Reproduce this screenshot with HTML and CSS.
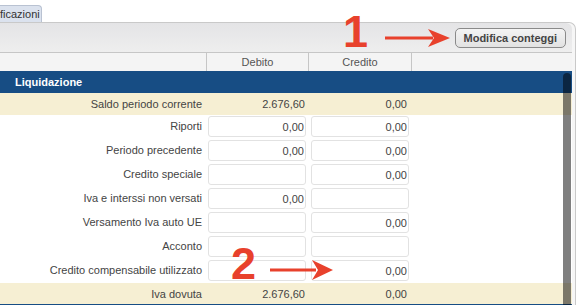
FILE: index.html
```html
<!DOCTYPE html>
<html lang="it">
<head>
  <meta charset="UTF-8">
  <title>Liquidazione</title>
  <link rel="stylesheet" href="styles.css">
</head>
<body>
  <div class="tabs">
    <div class="tab">ficazioni</div>
  </div>

  <div class="panel">
    <div class="toolbar">
      <button class="btn">Modifica conteggi</button>
    </div>

    <div class="colhead">
      <div></div>
      <div>Debito</div>
      <div>Credito</div>
      <div></div>
    </div>

    <div class="section">Liquidazione</div>

    <div class="row total">
      <div class="label">Saldo periodo corrente</div>
      <div class="val">2.676,60</div>
      <div class="val cr">0,00</div>
    </div>
    <div class="row">
      <div class="label">Riporti</div>
      <div class="cell"><input class="field" value="0,00" readonly></div>
      <div class="cell cr"><input class="field" value="0,00" readonly></div>
    </div>
    <div class="row">
      <div class="label">Periodo precedente</div>
      <div class="cell"><input class="field" value="0,00" readonly></div>
      <div class="cell cr"><input class="field" value="0,00" readonly></div>
    </div>
    <div class="row">
      <div class="label">Credito speciale</div>
      <div class="cell"><input class="field" value="" readonly></div>
      <div class="cell cr"><input class="field" value="0,00" readonly></div>
    </div>
    <div class="row">
      <div class="label">Iva e interssi non versati</div>
      <div class="cell"><input class="field" value="0,00" readonly></div>
      <div class="cell cr"><input class="field" value="" readonly></div>
    </div>
    <div class="row">
      <div class="label">Versamento Iva auto UE</div>
      <div class="cell"><input class="field" value="" readonly></div>
      <div class="cell cr"><input class="field" value="0,00" readonly></div>
    </div>
    <div class="row">
      <div class="label">Acconto</div>
      <div class="cell"><input class="field" value="" readonly></div>
      <div class="cell cr"><input class="field" value="" readonly></div>
    </div>
    <div class="row">
      <div class="label">Credito compensabile utilizzato</div>
      <div class="cell"><input class="field" value="" readonly></div>
      <div class="cell cr"><input class="field" value="0,00" readonly></div>
    </div>
    <div class="row total last">
      <div class="label">Iva dovuta</div>
      <div class="val">2.676,60</div>
      <div class="val cr">0,00</div>
    </div>

    <div class="scroll-thumb"></div>
  </div>

  <!-- annotations -->
  <div class="mark mark-1">1</div>
  <svg class="arrow arrow-1" width="70" height="20" viewBox="0 0 70 20">
    <path d="M0 8.5 H48 V11.5 H0 Z" fill="#e8412c"/>
    <path d="M43 1 L65 10 L43 19 L49 10 Z" fill="#e8412c"/>
  </svg>

  <div class="mark mark-2">2</div>
  <svg class="arrow arrow-2" width="66" height="24" viewBox="0 0 66 24">
    <path d="M0 10.5 H46 V13.5 H0 Z" fill="#e8412c"/>
    <path d="M42 2 L63 12 L42 22 L48 12 Z" fill="#e8412c"/>
  </svg>
</body>
</html>
```

FILE: styles.css
```css
body {
  margin: 0;
  font-family: "Liberation Sans", Arial, sans-serif;
  font-size: 11px;
  color: #444;
  background: #fff;
  width: 577px;
  height: 305px;
  overflow: hidden;
  position: relative;
}

.tabs {
  height: 22px;
  display: flex;
  align-items: flex-end;
}

.tab {
  height: 17px;
  line-height: 17px;
  width: 42px;
  box-sizing: border-box;
  background: #dbe2ee;
  border: 1px solid #b9c2d2;
  border-left: none;
  border-bottom: none;
  border-top-right-radius: 4px;
  color: #333;
  font-size: 11px;
  white-space: nowrap;
  overflow: hidden;
}

.panel {
  position: relative;
  width: 576px;
  box-sizing: border-box;
  border-top: 1px solid #c9c9c9;
  border-right: 1px solid #c9c9c9;
  border-top-right-radius: 7px;
  padding-right: 3px;
  background: #f6f6f6;
}

.toolbar {
  height: 29px;
  display: flex;
  justify-content: flex-end;
  align-items: center;
  padding-right: 6px;
  background: linear-gradient(#e4e4e6, #eeeeee);
  border-top-right-radius: 6px;
  box-sizing: border-box;
  padding-top: 1px;
}

.btn {
  font-family: "Liberation Sans", Arial, sans-serif;
  font-size: 11px;
  font-weight: bold;
  color: #444;
  height: 20px;
  padding: 0 8px;
  border: 1px solid #8a8a8a;
  border-radius: 5px;
  background: linear-gradient(#f4f4f4, #e2e2e2);
}

.colhead {
  display: grid;
  grid-template-columns: 206px 102px 103px 1fr;
  height: 19px;
  box-sizing: border-box;
  border-top: 1px solid #c6c6c6;
  background: #f4f4f4;
  color: #555;
}

.colhead div {
  border-left: 1px solid #c6c6c6;
  text-align: center;
  line-height: 18px;
}

.colhead div:first-child {
  border-left: none;
}

.section {
  height: 22px;
  line-height: 22px;
  background: #174d84;
  color: #fff;
  font-weight: bold;
  padding-left: 15px;
}

.row {
  display: grid;
  grid-template-columns: 206px 102px 103px 1fr;
  height: 24px;
  background: #fff;
}

.row.total {
  height: 22px;
  background: #f6efd3;
  align-items: center;
}

.row.last {
  height: 21px;
  border-bottom: 2px solid #174d84;
}

.label {
  text-align: right;
  padding-right: 4px;
  align-self: center;
}

.row:not(.total) .label {
  margin-top: -2px;
}

.val {
  text-align: right;
  padding-right: 3px;
}

.val.cr {
  padding-right: 4px;
}

.cell {
  padding-top: 1px;
  padding-left: 2px;
}

.cell.cr {
  padding-left: 3px;
}

.field {
  display: block;
  width: 98px;
  height: 21px;
  box-sizing: border-box;
  border: 1px solid #e2e2e2;
  border-radius: 3px;
  background: #fff;
  font-family: "Liberation Sans", Arial, sans-serif;
  font-size: 11px;
  color: #444;
  text-align: right;
  padding: 0 1px 0 0;
  outline: none;
}

.scroll-thumb {
  position: absolute;
  left: 563px;
  top: 50px;
  width: 8px;
  bottom: 0;
  background: rgba(0, 0, 0, 0.5);
  border-radius: 4px 4px 0 0;
}

.mark {
  position: absolute;
  color: #e8412c;
  font-family: "Liberation Sans", Arial, sans-serif;
  font-weight: bold;
  font-size: 45px;
  line-height: 1;
}

.mark-1 {
  left: 343px;
  top: 9px;
}

.mark-2 {
  left: 231px;
  top: 241px;
}

.arrow {
  position: absolute;
}

.arrow-1 {
  left: 385px;
  top: 28px;
}

.arrow-2 {
  left: 270px;
  top: 258px;
}
```
